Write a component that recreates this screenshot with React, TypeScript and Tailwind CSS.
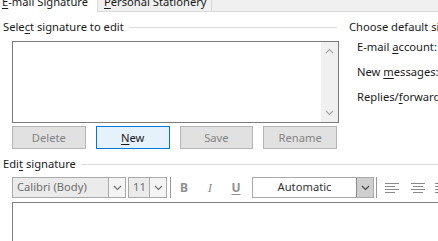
import React from "react";

function Chevron({ up = false, className = "" }: { up?: boolean; className?: string }) {
  return (
    <svg width="9" height="6" viewBox="0 0 9 6" className={className}>
      <polyline
        points={up ? "1,5 4.5,1.5 8,5" : "1,1 4.5,4.5 8,1"}
        fill="none"
        stroke="currentColor"
        strokeWidth="1.1"
      />
    </svg>
  );
}

function U({ children }: { children: React.ReactNode }) {
  return <span className="underline underline-offset-[2px] decoration-1">{children}</span>;
}

function GroupHeader({ children, className = "" }: { children: React.ReactNode; className?: string }) {
  return (
    <div className={`flex h-[16px] items-center ${className}`}>
      <span className="whitespace-nowrap leading-[16px]">{children}</span>
      <div className="ml-[5px] h-px flex-1 bg-[#dcdcdc]" />
    </div>
  );
}

function Btn({ label, primary = false }: { label: React.ReactNode; primary?: boolean }) {
  return (
    <div
      className={`flex h-[23px] w-[74px] items-center justify-center border leading-[16px] ${
        primary
          ? "border-[#0078d7] bg-[#e5f1fb] text-[#1a1a1a]"
          : "border-[#b5b5b5] bg-[#e1e1e1] text-[#838383]"
      }`}
    >
      {label}
    </div>
  );
}

function AlignIcon({ center = false }: { center?: boolean }) {
  const rows = center ? [[0, 14], [2, 12], [0, 14], [2, 12]] : [[0, 14], [0, 10], [0, 14], [0, 10]];
  return (
    <svg width="14" height="10" viewBox="0 0 14 10">
      {rows.map(([a, b], i) => (
        <line key={i} x1={a} x2={b} y1={i * 3 + 0.5} y2={i * 3 + 0.5} stroke="#8a8a8a" strokeWidth="1" />
      ))}
    </svg>
  );
}

export default function App() {
  return (
    <div
      className="flex h-[241px] w-[438px] flex-col overflow-hidden bg-white text-[11.2px] text-[#1a1a1a]"
      style={{ fontFamily: '"Segoe UI", "Noto Sans", sans-serif' }}
    >
      {/* tabs */}
      <div className="flex h-[12px] shrink-0 bg-[#f0f0f0]">
        <div className="h-[12px] w-[97px] overflow-hidden bg-white pl-[2px]">
          <div className="-mt-[6px] whitespace-nowrap leading-[16px]">
            <U>E</U>-mail Signature
          </div>
        </div>
        <div className="h-[12px] w-[115px] overflow-hidden border-x border-b border-[#d9d9d9] pl-[6px]">
          <div className="-mt-[6px] whitespace-nowrap leading-[16px]">
            <U>P</U>ersonal Stationery
          </div>
        </div>
        <div className="h-[12px] flex-1 border-b border-[#d9d9d9]" />
      </div>

      {/* top section */}
      <div className="flex pt-[7px]">
        <div className="w-[337px] shrink-0 pl-[3px]">
          <GroupHeader>
            Sele<U>c</U>t signature to edit
          </GroupHeader>
          <div className="ml-[9px] mt-[6px] flex h-[82px] w-[327px] border border-[#7a7a7a] bg-white">
            <div className="flex-1" />
            <div className="flex w-[17px] flex-col items-center justify-between bg-[#f0f0f0] py-[6px] text-[#a6a6a6]">
              <Chevron up />
              <Chevron />
            </div>
          </div>
          <div className="ml-[9px] mt-[3px] flex gap-[10px]">
            <Btn label="Delete" />
            <Btn primary label={<><U>N</U>ew</>} />
            <Btn label="Save" />
            <Btn label="Rename" />
          </div>
        </div>
        <div className="ml-[12px] flex flex-col whitespace-nowrap leading-[16px]">
          <div>Choose default signature</div>
          <div className="ml-[8px] mt-[4px]">
            E-mail <U>a</U>ccount:
          </div>
          <div className="ml-[8px] mt-[9px]">
            New <U>m</U>essages:
          </div>
          <div className="ml-[8px] mt-[9px]">
            Replies/<U>f</U>orwards:
          </div>
        </div>
      </div>

      {/* edit signature */}
      <GroupHeader className="ml-[3px] mt-[7px]">
        Edi<U>t</U> signature
      </GroupHeader>

      <div className="ml-[12px] mt-[5px] flex h-[21px] shrink-0 items-stretch">
        <div className="flex w-[114px] shrink-0 border border-[#a9a9a9] bg-[#ebebeb]">
          <div className="flex flex-1 items-center pl-[4px] text-[#6d6d6d]">Calibri (Body)</div>
          <div className="flex w-[17px] items-center justify-center border-l border-[#a9a9a9] bg-[#f4f4f4] text-[#6d6d6d]">
            <Chevron />
          </div>
        </div>
        <div className="ml-[2px] flex w-[39px] shrink-0 border border-[#a9a9a9] bg-[#ebebeb]">
          <div className="flex flex-1 items-center pl-[4px] text-[#6d6d6d]">11</div>
          <div className="flex w-[17px] items-center justify-center border-l border-[#a9a9a9] bg-[#f4f4f4] text-[#6d6d6d]">
            <Chevron />
          </div>
        </div>
        <div className="ml-[3px] w-px shrink-0 bg-[#9a9a9a]" />
        <div className="ml-[5px] flex w-[16px] shrink-0 items-center justify-center text-[12px] font-bold text-[#8f8f8f]">B</div>
        <div
          className="ml-[10px] flex w-[16px] shrink-0 items-center justify-center italic text-[#8f8f8f]"
          style={{ fontFamily: '"Liberation Serif", serif', fontSize: 13 }}
        >
          I
        </div>
        <div className="ml-[10px] flex w-[16px] shrink-0 items-center justify-center text-[12px] font-bold text-[#8f8f8f]">
          <span className="underline underline-offset-[2px]">U</span>
        </div>
        <div className="ml-[8px] flex w-[122px] shrink-0 border border-[#a9a9a9] bg-white">
          <div className="flex flex-1 items-center justify-center text-[#333]">Automatic</div>
          <div className="flex w-[17px] items-center justify-center border-l border-[#8a8a8a] bg-[#cfcfcf] text-[#444]">
            <Chevron />
          </div>
        </div>
        <div className="ml-[2px] w-px shrink-0 bg-[#9a9a9a]" />
        <div className="ml-[8px] flex shrink-0 items-center">
          <AlignIcon />
        </div>
        <div className="ml-[12px] flex shrink-0 items-center">
          <AlignIcon center />
        </div>
        <div className="ml-[10px] flex shrink-0 items-center">
          <AlignIcon />
        </div>
      </div>

      <div className="ml-[12px] mt-[4px] flex-1 border-l border-t border-[#828282] bg-white" />
    </div>
  );
}
